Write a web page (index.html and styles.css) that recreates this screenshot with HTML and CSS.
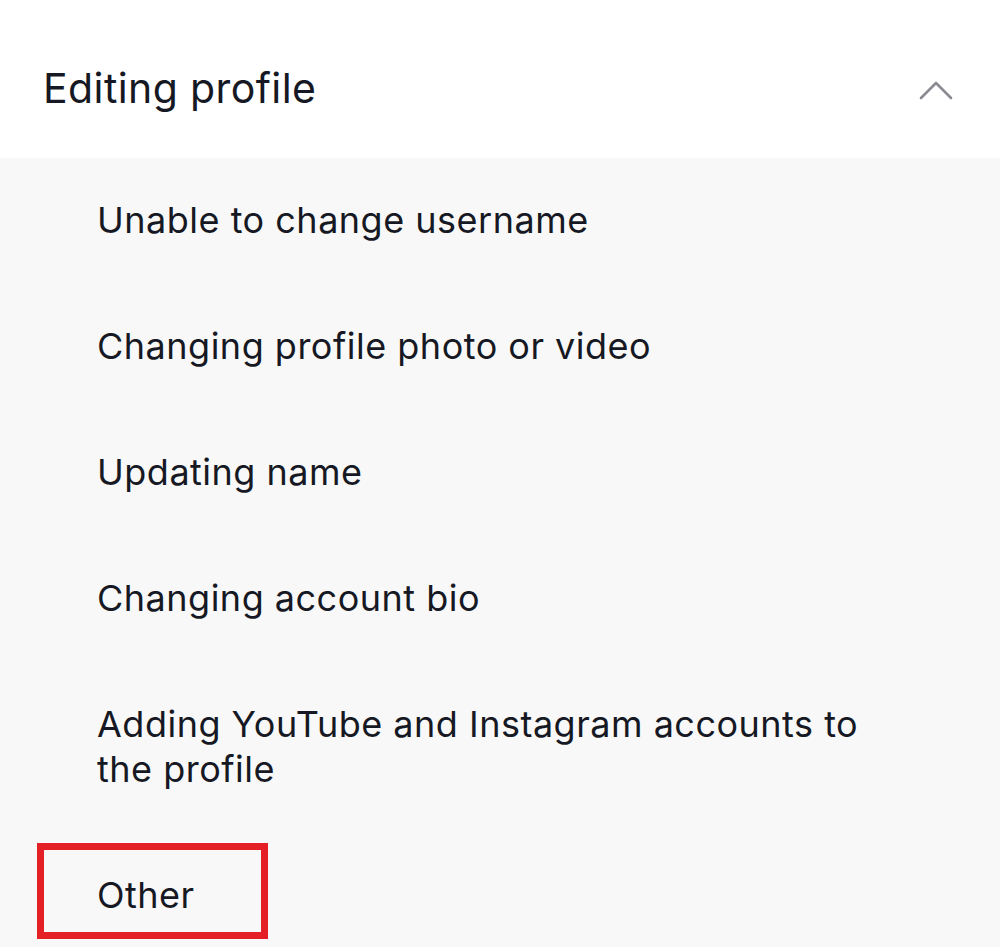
FILE: index.html
```html
<!DOCTYPE html>
<html>
<head>
<meta charset="utf-8">
<link rel="stylesheet" href="styles.css">
</head>
<body>
<div class="page">
  <div class="section-head">
    <span class="section-title">Editing profile</span>
    <svg class="chevron" width="34" height="20" viewBox="0 0 34 20"><path d="M2 18 L17 3 L32 18" fill="none" stroke="#8a8b91" stroke-width="2.6" stroke-linecap="round" stroke-linejoin="round"/></svg>
  </div>
  <ul class="items">
    <li class="item">Unable to change username</li>
    <li class="item">Changing profile photo or video</li>
    <li class="item">Updating name</li>
    <li class="item">Changing account bio</li>
    <li class="item">Adding YouTube and Instagram accounts to the profile</li>
    <li class="item item-marked"><span class="mark"></span>Other</li>
  </ul>
</div>
</body>
</html>
```
FILE: styles.css
```css
html, body {
  margin: 0;
  padding: 0;
  background: #f8f8f8;
}
.page {
  width: 1000px;
  height: 947px;
  overflow: hidden;
  font-family: "Inter", "Liberation Sans", sans-serif;
  color: #161823;
}
.section-head {
  height: 158px;
  background: #ffffff;
  display: flex;
  align-items: center;
  justify-content: space-between;
  padding: 0 47px 0 43px;
  box-sizing: border-box;
}
.section-title {
  font-size: 41px;
  line-height: 50px;
  letter-spacing: 0.4px;
  margin-top: 18px;
}
.chevron {
  margin-top: 22px;
}
.items {
  list-style: none;
  margin: 0;
  padding: 0;
  background: #f8f8f8;
}
.item {
  font-size: 36px;
  line-height: 45px;
  letter-spacing: 0.5px;
  padding: 40px 130px 41px 97px;
}
.item-marked {
  position: relative;
}
.mark {
  position: absolute;
  left: 37px;
  top: 10px;
  width: 231px;
  height: 96px;
  border: 7px solid #e41f26;
  box-sizing: border-box;
}
```
